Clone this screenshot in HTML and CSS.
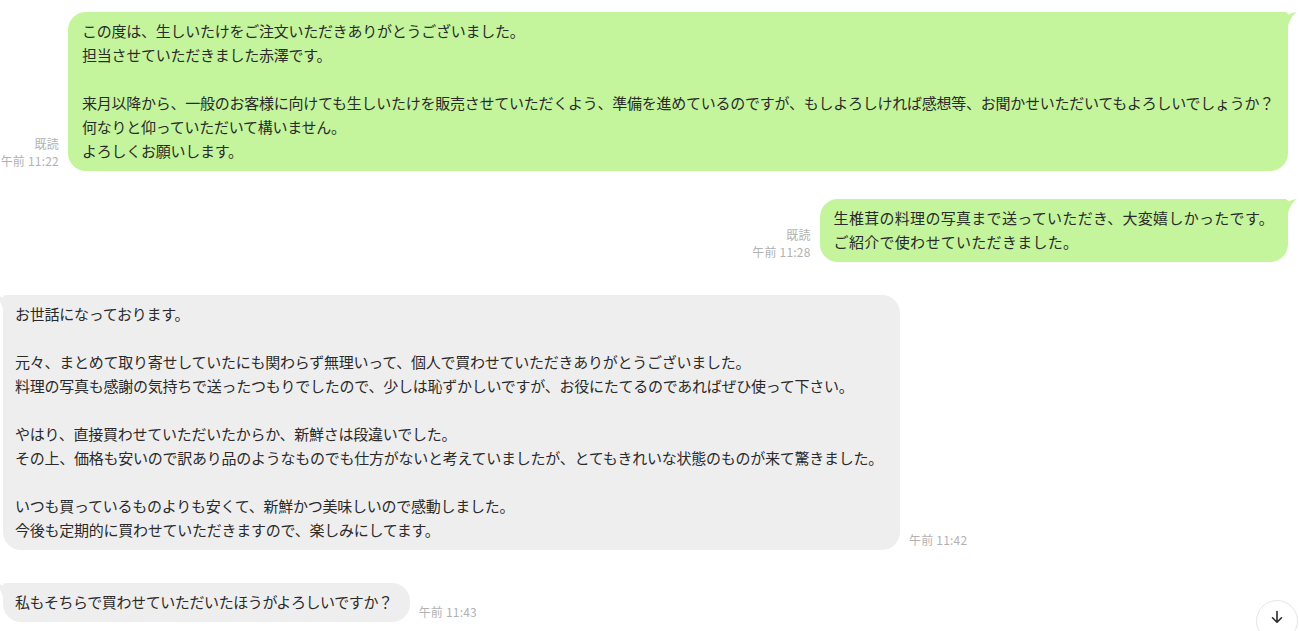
FILE: index.html
```html
<!DOCTYPE html>
<html lang="ja">
<head>
<meta charset="utf-8">
<title>チャット</title>
<link rel="stylesheet" href="styles.css">
</head>
<body>
<main class="chat">
  <div class="row out">
    <div class="meta"><span>既読</span><span>午前 11:22</span></div>
    <div class="bubble bubble-out">
      <svg class="tail tail-out" viewBox="0 0 24 16" width="24" height="16"><path d="M0,0 L10,0 Q13,0 14.6,2.4 Q18,0.2 23,0 Q17,3.5 14,14 L0,14 Z"/></svg>
      <p>この度は、生しいたけをご注文いただきありがとうございました。<br>担当させていただきました赤澤です。<br><br>来月以降から、一般のお客様に向けても生しいたけを販売させていただくよう、準備を進めているのですが、もしよろしければ感想等、お聞かせいただいてもよろしいでしょうか？<br>何なりと仰っていただいて構いません。<br>よろしくお願いします。</p>
    </div>
  </div>

  <div class="row out next-out">
    <div class="meta"><span>既読</span><span>午前 11:28</span></div>
    <div class="bubble bubble-out">
      <svg class="tail tail-out" viewBox="0 0 24 16" width="24" height="16"><path d="M0,0 L10,0 Q13,0 14.6,2.4 Q18,0.2 23,0 Q17,3.5 14,14 L0,14 Z"/></svg>
      <p class="wide">生椎茸の料理の写真まで送っていただき、大変嬉しかったです。<br>ご紹介で使わせていただきました。</p>
    </div>
  </div>

  <div class="row in">
    <div class="bubble bubble-in">
      <svg class="tail tail-in" viewBox="0 0 24 16" width="24" height="16"><path d="M0,0 L10,0 Q13,0 14.6,2.4 Q18,0.2 23,0 Q17,3.5 14,14 L0,14 Z"/></svg>
      <p>お世話になっております。<br><br>元々、まとめて取り寄せしていたにも関わらず無理いって、個人で買わせていただきありがとうございました。<br>料理の写真も感謝の気持ちで送ったつもりでしたので、少しは恥ずかしいですが、お役にたてるのであればぜひ使って下さい。<br><br>やはり、直接買わせていただいたからか、新鮮さは段違いでした。<br>その上、価格も安いので訳あり品のようなものでも仕方がないと考えていましたが、とてもきれいな状態のものが来て驚きました。<br><br>いつも買っているものよりも安くて、新鮮かつ美味しいので感動しました。<br>今後も定期的に買わせていただきますので、楽しみにしてます。</p>
    </div>
    <div class="meta"><span>午前 11:42</span></div>
  </div>

  <div class="row in">
    <div class="bubble bubble-in">
      <svg class="tail tail-in" viewBox="0 0 24 16" width="24" height="16"><path d="M0,0 L10,0 Q13,0 14.6,2.4 Q18,0.2 23,0 Q17,3.5 14,14 L0,14 Z"/></svg>
      <p class="tight">私もそちらで買わせていただいたほうがよろしいですか？</p>
    </div>
    <div class="meta"><span>午前 11:43</span></div>
  </div>

  <button class="scroll-down" type="button" aria-label="最新のメッセージへ">
    <svg viewBox="0 0 16 16" width="16" height="16"><path d="M8 2.5 V13 M3.5 8.8 L8 13.3 L12.5 8.8" fill="none" stroke="#2a2a2a" stroke-width="1.6" stroke-linecap="round" stroke-linejoin="round"/></svg>
  </button>
</main>
</body>
</html>
```

FILE: styles.css
```css
* {
  box-sizing: border-box;
}

html, body {
  margin: 0;
  padding: 0;
  background: #ffffff;
  overflow: hidden;
}

body {
  width: 1299px;
  height: 631px;
  font-family: "Noto Sans CJK JP", "Noto Sans", sans-serif;
  color: #2a2a2a;
}

.chat {
  position: relative;
  height: 631px;
  padding-top: 12px;
  display: flex;
  flex-direction: column;
  overflow: hidden;
}

.row {
  display: flex;
  align-items: flex-end;
  gap: 9px;
  margin-top: 33px;
}

.row:first-child {
  margin-top: 0;
}

.row.next-out {
  margin-top: 28px;
}

.row.out {
  justify-content: flex-end;
  padding-right: 11px;
}

.row.in {
  justify-content: flex-start;
  padding-left: 3px;
}

.meta {
  display: flex;
  flex-direction: column;
  align-items: flex-end;
  flex-shrink: 0;
  white-space: nowrap;
  font-size: 12px;
  letter-spacing: 0.2px;
  line-height: 17px;
  color: #b2b2b2;
  padding-bottom: 2px;
}

.bubble {
  position: relative;
  flex-shrink: 0;
  border-radius: 18px;
  padding: 7px 14px 8px 14px;
}

.bubble p {
  margin: 0;
  white-space: nowrap;
  font-size: 15px;
  letter-spacing: -0.25px;
  line-height: 24px;
}

.bubble p.wide {
  letter-spacing: 0.3px;
}

.bubble p.tight {
  letter-spacing: -0.4px;
}

.bubble-out {
  background: #c4f59c;
  border-top-right-radius: 4px;
}

.bubble-in {
  background: #eeeeee;
  border-top-left-radius: 4px;
  padding-left: 12px;
  padding-right: 17px;
}

.tail {
  position: absolute;
  top: 0;
  display: block;
}

.tail-out {
  right: -10px;
  fill: #c4f59c;
}

.tail-in {
  left: -10px;
  fill: #eeeeee;
  transform: scaleX(-1);
}

.scroll-down {
  position: absolute;
  right: 1px;
  bottom: -11px;
  width: 42px;
  height: 42px;
  border-radius: 50%;
  border: 1px solid #e6e6e6;
  background: #ffffff;
  display: flex;
  align-items: center;
  justify-content: center;
  padding: 0 0 8px 0;
  cursor: pointer;
}
```
